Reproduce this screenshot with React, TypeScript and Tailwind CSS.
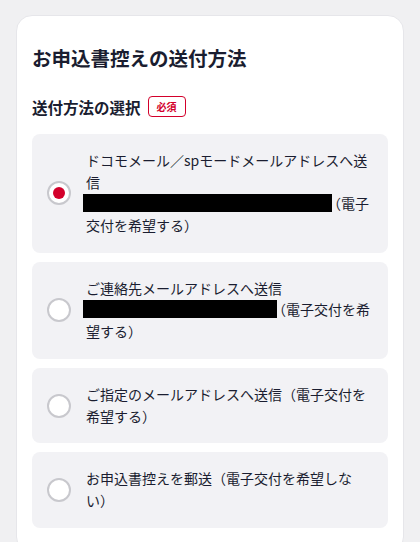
import { useState } from "react";

type Option = {
  id: string;
  before?: string;
  maskWidth?: number;
  after: string;
};

const OPTIONS: Option[] = [
  {
    id: "docomo",
    before: "ドコモメール／spモードメールアドレスへ送信",
    maskWidth: 249,
    after: "（電子交付を希望する）",
  },
  {
    id: "contact",
    before: "ご連絡先メールアドレスへ送信",
    maskWidth: 194,
    after: "（電子交付を希望する）",
  },
  {
    id: "specified",
    after: "ご指定のメールアドレスへ送信（電子交付を希望する）",
  },
  {
    id: "mail",
    after: "お申込書控えを郵送（電子交付を希望しない）",
  },
];

function Radio({ checked }: { checked: boolean }) {
  return (
    <span className="flex h-6 w-6 shrink-0 items-center justify-center rounded-full border-2 border-[#c8c8cd] bg-white">
      {checked && <span className="h-3 w-3 rounded-full bg-[#d3002b]" />}
    </span>
  );
}

export default function App() {
  const [selected, setSelected] = useState("docomo");

  return (
    <div
      className="min-h-[542px] bg-[#f0f0f2] px-4 pt-[15px] text-[#1a1d30]"
      style={{ fontFamily: '"Noto Sans CJK JP", "Noto Sans", sans-serif' }}
    >
      <section className="rounded-2xl border border-[#e6e6ea] bg-white px-[15px] pb-6 pt-7">
        <h1 className="text-[19.5px] font-bold leading-7">お申込書控えの送付方法</h1>

        <div className="mt-6 flex items-center gap-[7px]">
          <h2 className="text-[15.5px] font-bold leading-5">送付方法の選択</h2>
          <span className="flex h-[21px] w-[38px] items-center justify-center rounded-[4px] border-[1.5px] border-[#d3002b] text-[10px] font-bold leading-none text-[#d3002b]">
            必須
          </span>
        </div>

        <div className="mt-[17px] flex flex-col gap-[9px]">
          {OPTIONS.map((option) => (
            <label
              key={option.id}
              onClick={() => setSelected(option.id)}
              className="flex cursor-pointer items-center gap-[15px] rounded-lg bg-[#f2f2f5] py-4 pl-[15px] pr-4"
            >
              <Radio checked={selected === option.id} />
              <span className="w-[286px] text-[14px] leading-[1.55]">
                {option.before}
                {option.before && <br />}
                {option.maskWidth && (
                  <span
                    className="-ml-[3px] -mr-[5px] inline-block h-[18px] bg-black align-[-3px]"
                    style={{ width: option.maskWidth }}
                  />
                )}
                {option.after}
              </span>
            </label>
          ))}
        </div>
      </section>
    </div>
  );
}
